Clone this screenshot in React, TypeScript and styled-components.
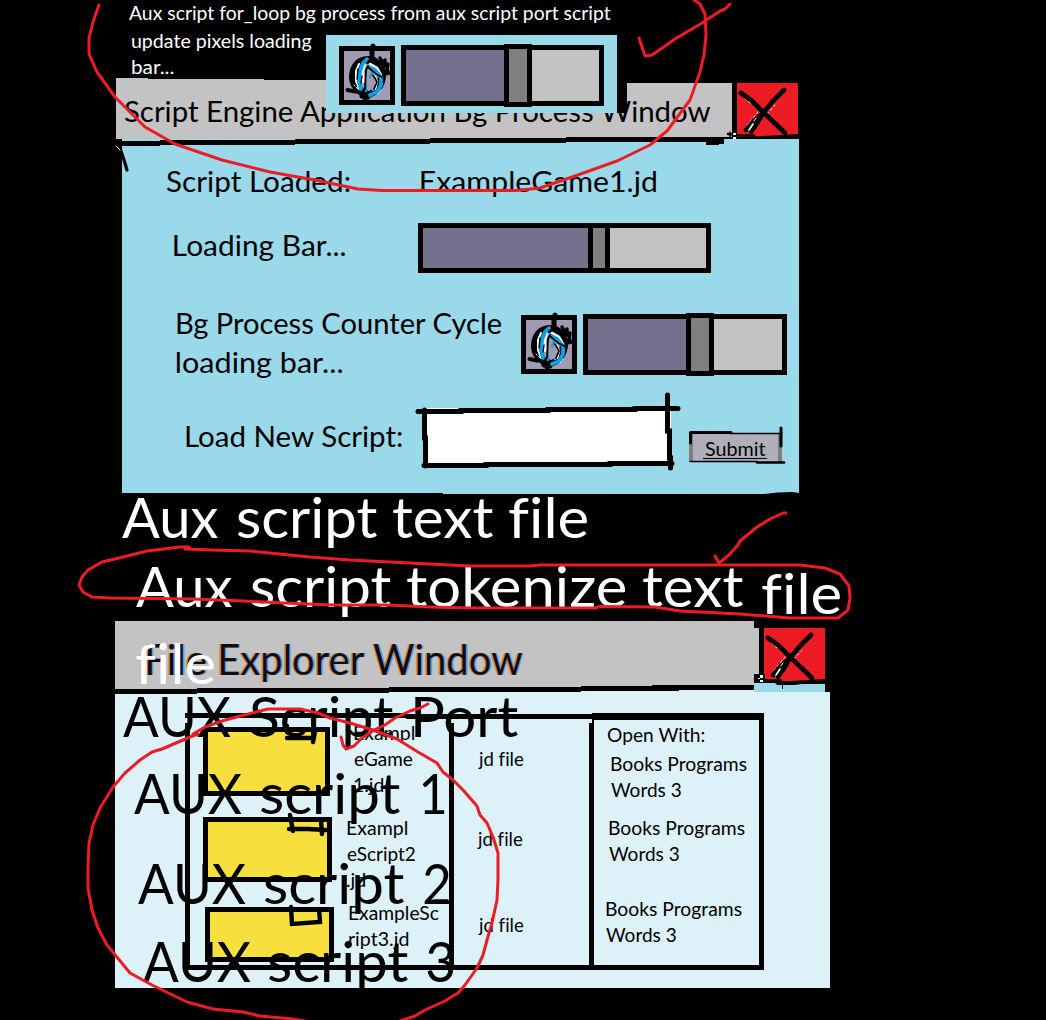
import React, { Fragment } from "react";
import styled, { createGlobalStyle } from "styled-components";

const ink = "#000";
const marker = "#ed1c24";
const cyan = "#99d9ea";
const silver = "#c3c3c3";
const pale = "#dcf1f8";

const GlobalStyle = createGlobalStyle`
  body { margin: 0; background: #000; }
`;

const Desktop = styled.main`
  position: relative;
  width: 1046px;
  height: 1020px;
  overflow: hidden;
  background: #000;
  font-family: Lato, "Open Sans", sans-serif;
`;

/* ---------- text that is condensed to a given ink width ---------- */

const Line = styled.span<{ $size: number; $line: number; $color: string }>`
  display: block;
  flex: none;
  font-size: ${(p) => p.$size}px;
  line-height: ${(p) => p.$line}px;
  height: ${(p) => p.$line}px;
  color: ${(p) => p.$color};
  white-space: nowrap;
  letter-spacing: 0.01px;
  font-variant-ligatures: none;
`;

const Glyphs = styled.span`
  display: inline-block;
  transform-origin: 0 50%;
`;

const pen = document.createElement("canvas").getContext("2d")!;

type TypeProps = {
  children: string;
  w: number;
  size?: number;
  line?: number;
  color?: string;
  className?: string;
};

function Type({ children, w, size = 18.5, line = 26, color = ink, className }: TypeProps) {
  pen.font = `${size}px Lato, "Open Sans", sans-serif`;
  pen.letterSpacing = "0.01px";
  const m = pen.measureText(children);
  const scale = w / (m.actualBoundingBoxLeft + m.actualBoundingBoxRight);
  const shift = m.actualBoundingBoxLeft * scale;
  return (
    <Line className={className} $size={size} $line={line} $color={color} style={{ width: w }}>
      <Glyphs style={{ transform: `translateX(${shift}px) scaleX(${scale})` }}>{children}</Glyphs>
    </Line>
  );
}

const Heading = (p: TypeProps) => <Type size={28} line={39} {...p} />;

const Words = styled.div`
  display: flex;
`;

/* Each word carries its own width and the gap that follows it. */
const Banner = ({ words, color }: { words: [string, number, number?][]; color?: string }) => (
  <Words>
    {words.map(([text, w, gap]) => (
      <Fragment key={text}>
        <Type size={57} line={77} w={w} color={color}>{text}</Type>
        {gap ? <Gap $w={gap}> </Gap> : null}
      </Fragment>
    ))}
  </Words>
);

const Gap = styled.span<{ $w: number }>`
  flex: none;
  width: ${(p) => p.$w}px;
`;

const Note = styled.div<{ $x: number; $y: number }>`
  position: absolute;
  left: ${(p) => p.$x}px;
  top: ${(p) => p.$y}px;
`;

/* ---------- shared layout ---------- */

const Window = styled.section<{ $x: number; $y: number; $w: number }>`
  position: absolute;
  left: ${(p) => p.$x}px;
  top: ${(p) => p.$y}px;
  width: ${(p) => p.$w}px;
`;

const TitleBar = styled.header<{ $h: number }>`
  display: flex;
  height: ${(p) => p.$h}px;
`;

const TitleFill = styled.div<{ $w: number; $top: number; $left: number }>`
  box-sizing: border-box;
  width: ${(p) => p.$w}px;
  padding: ${(p) => p.$top}px 0 0 ${(p) => p.$left}px;
  background: ${silver};
`;

const Row = styled.div<{ $top?: number; $left?: number; $h?: number }>`
  display: flex;
  align-items: flex-start;
  margin-top: ${(p) => p.$top ?? 0}px;
  margin-left: ${(p) => p.$left ?? 0}px;
  height: ${(p) => (p.$h ? p.$h + "px" : "auto")};
`;

const Slot = styled.div<{ $top?: number; $left?: number }>`
  flex: none;
  margin: ${(p) => p.$top ?? 0}px 0 0 ${(p) => p.$left ?? 0}px;
`;

const Drawing = styled.svg`
  position: absolute;
  left: 0;
  top: 0;
  overflow: visible;
  pointer-events: none;
`;

/* ---------- close button ---------- */

const CloseBox = styled.button<{ $top: number; $left: number; $h: number }>`
  flex: none;
  width: 61px;
  height: ${(p) => p.$h}px;
  margin: ${(p) => p.$top}px 0 0 ${(p) => p.$left}px;
  padding: 0;
  border: 0;
  background: ${marker};
  svg { display: block; overflow: visible; }
`;

function Close(p: { top: number; left: number; h: number }) {
  return (
    <CloseBox $top={p.top} $left={p.left} $h={p.h} aria-label="Close">
      <svg width="61" height="54" fill="none" strokeLinecap="round" strokeLinejoin="round">
        <path d="M4 12L13 20M38 22L30 31M24 25L17 34L8 45" stroke="#fff" strokeWidth="1" strokeDasharray="2 3" />
        <path d="M4 10L14 17L25 28L48 50" stroke={ink} strokeWidth="4.8" />
        <path d="M47 7L36 18L26 30L17 38L9 47" stroke={ink} strokeWidth="4.8" />
        <path d="M25 32L19 42L14 49" stroke={ink} strokeWidth="4.4" />
        <path d="M16 41L12 47" stroke="#fff" strokeWidth="1.6" />
        <path d="M19 35L17 38" stroke="#fff" strokeWidth="1" />
        <path d="M-9 51L4 52.5L17 52.5" stroke={ink} strokeWidth="2.6" />
        <path d="M17 55L36 54L60 52.5" stroke={ink} strokeWidth="3" />
        <path d="M-7 49v8M-1 48v4M18.500 54v7" stroke={ink} strokeWidth="1.4" />
        <path d="M-4 50h3v2h-3zM-4 54h3v2h-3z" fill="#fff" />
        <path d="M0 -1H14M16 -1H46" stroke={ink} strokeWidth="1.4" />
      </svg>
    </CloseBox>
  );
}

/* ---------- progress bar ---------- */

const Track = styled.div<{ $w: number; $h: number }>`
  box-sizing: border-box;
  display: flex;
  width: ${(p) => p.$w}px;
  height: ${(p) => p.$h}px;
  border: 5px solid ${ink};
  background: ${silver};
`;
const Done = styled.div<{ $w: number }>`
  width: ${(p) => p.$w}px;
  background: #756f8d;
`;
const Thumb = styled.div<{ $w: number; $bleed: number }>`
  box-sizing: border-box;
  width: ${(p) => p.$w}px;
  margin: ${(p) => -5 - p.$bleed}px 0;
  border: 5px solid ${ink};
  background: #7f7f7f;
`;

const CycleBar = () => (
  <Track $w={204} $h={61}>
    <Done $w={98} />
    <Thumb $w={28} $bleed={1} />
  </Track>
);

/* ---------- counter icon ---------- */

const IconFrame = styled.div`
  box-sizing: border-box;
  width: 56px;
  height: 59px;
  border: 5px solid ${ink};
  background: #9f9bb2;
  svg { display: block; margin: -5px; overflow: visible; }
`;

const CounterIcon = () => (
  <IconFrame>
    <svg width="56" height="59" fill="none" strokeLinecap="round" strokeLinejoin="round">
      <path d="M34 0L33 3L33 13" stroke={ink} strokeWidth="5" />
      <path d="M29 14C19 14 14 22 14 31C14 39 19 44 26 48C37 48 43 38 43 29C42 20 37 14 29 14Z" stroke={ink} strokeWidth="8" />
      <path d="M41 12L44 17L46 14L46 20L49 18L48 24L50 27L46 28L43 20" stroke={ink} strokeWidth="3.400" />
      <path d="M8.500 44L16 45.500L24 45" stroke={ink} strokeWidth="4" />
      <path d="M23 50L29 51M26 48L26 52" stroke={ink} strokeWidth="5" />
      <path d="M20 18L17 25L17 35L20 43" stroke="#fff" strokeWidth="2" />
      <path d="M25 18L23 26L24 35" stroke="#fff" strokeWidth="3.800" />
      <path d="M31 18L38 22L42 29M34 27L38 36L36 43" stroke="#fff" strokeWidth="2.600" />
      <path d="M28 13L24 17L21 25L20 35L22 43" stroke="#00a2e8" strokeWidth="3.800" />
      <path d="M30 21L36 24L42 31L42 39L38 46L31 49" stroke="#00a2e8" strokeWidth="3.800" />
      <path d="M27 39L27 45M33 27L31 31" stroke="#00a2e8" strokeWidth="2.400" />
      <path d="M31 34L30 43M33 37L34 43" stroke="#9f9bb2" strokeWidth="4" />
      <path d="M29 20L27 24L26 43M30 22L37 28L43 31M34 29L38 36L35 43" stroke={ink} strokeWidth="1.800" />
      <path d="M19 23L18 33M23 30L22 37" stroke={ink} strokeWidth="1.400" />
      <path d="M15 39L19 43M39 48L43 43" stroke="#fff" strokeWidth="1" strokeDasharray="1.500 2" />
    </svg>
  </IconFrame>
);

/* ---------- script engine window ---------- */

const EngineBody = styled.div`
  position: relative;
  box-sizing: border-box;
  width: 677px;
  height: 355px;
  margin-left: 7px;
  padding-top: 23px;
  background: ${cyan};
`;

const Field = styled.input`
  position: relative;
  box-sizing: border-box;
  display: block;
  width: 246px;
  height: 57px;
  padding: 0 8px;
  border: 0;
  outline: 0;
  background: #fff;
`;

const SubmitButton = styled.button`
  box-sizing: border-box;
  display: flex;
  align-items: flex-start;
  width: 93px;
  height: 29px;
  padding: 3px 0 0 10px;
  border: solid #7f7f7f;
  border-width: 0 4px;
  background: #b0aebb;
  font-family: inherit;
`;

const Underlined = styled.div`
  width: 64px;
  height: 22px;
  border-bottom: 1px solid ${ink};
`;

const EngineWindow = () => (
  <Window $x={115} $y={78} $w={684}>
    <TitleBar $h={61}>
      <TitleFill $w={617} $top={14} $left={9}>
        <Heading w={588}>Script Engine Application Bg Process Window</Heading>
      </TitleFill>
      <Close top={5} left={5} h={54} />
    </TitleBar>
    <EngineBody>
      <Row $left={44} $h={39}>
        <Heading w={184}>Script Loaded:</Heading>
        <Slot $left={71}><Heading w={235}>ExampleGame1.jd</Heading></Slot>
      </Row>
      <Row $top={22} $left={52} $h={50}>
        <Slot $top={3}><Heading w={172}>Loading Bar...</Heading></Slot>
        <Slot $left={72}>
          <Track $w={293} $h={50}>
            <Done $w={165} />
            <Thumb $w={22} $bleed={0} />
          </Track>
        </Slot>
      </Row>
      <Row $top={31} $left={55} $h={78}>
        <div>
          <Heading w={325}>Bg Process Counter Cycle</Heading>
          <Heading w={166}>loading bar...</Heading>
        </div>
        <Slot $top={11} $left={19}><CounterIcon /></Slot>
        <Slot $top={10} $left={6}><CycleBar /></Slot>
      </Row>
      <Row $top={26} $left={64}>
        <Slot $top={9}><Heading w={217}>Load New Script:</Heading></Slot>
        <Slot $left={22}><Field aria-label="Load New Script" /></Slot>
        <Slot $top={25} $left={18}>
          <SubmitButton>
            <Underlined><Type w={61}>Submit</Type></Underlined>
          </SubmitButton>
        </Slot>
      </Row>
    </EngineBody>
    <Drawing width="684" height="416" viewBox="115 78 684 416" fill={ink}>
      <path d="M115 78h1v62h-1zM148 78H264V79H148zM264 78H627V80H264zM627 78H733V83H627z" />
      <path d="M617 78h10v35h-10z" />
      <path d="M115 141H160V140H295V139H430V138H566V137H733V139H724V144H719V145H706V142H700V142H566V143H430V144H295V145H160V146H115z" />
      <path d="M122 494V493H443V494z" />
      <g fill="none" stroke={ink} strokeLinecap="round" strokeLinejoin="round">
        <path d="M116 146L121 151L124 160L127 170" strokeWidth="3.200" />
        <path d="M116 146L120 150" stroke="#fff" strokeWidth="1" />
        <g strokeWidth="5" strokeLinejoin="miter">
          <path d="M418 411.500H461V410.500H548V409.500H635V408.500H678" />
          <path d="M424.500 410V438H425.500V466" />
          <path d="M667.500 395V431H669.500V458H670.500V468" />
          <path d="M424 465.500H486V464.500H610V463.500H672" />
        </g>
        <path d="M690.500 443V432.500H731M781 428V446" strokeWidth="3" />
        <path d="M730 433.500H782M690 461.500H757" strokeWidth="1.400" />
        <path d="M757 462.500H784" strokeWidth="2.600" />
        <path d="M758 496L764 495L778 493.500L792 493L799 494" strokeWidth="2" />
      </g>
    </Drawing>
  </Window>
);

/* ---------- floating progress popup ---------- */

const Popup = styled.aside`
  position: absolute;
  left: 326px;
  top: 35px;
  box-sizing: border-box;
  display: flex;
  align-items: flex-start;
  gap: 6px;
  width: 291px;
  height: 78px;
  padding: 10px 13px;
  background: ${cyan};
`;

/* ---------- file explorer window ---------- */

const ExplorerTitle = styled(Type)`
  text-shadow: -1.500px 0 rgba(216, 120, 20, 0.700), 1.500px 0 rgba(60, 150, 235, 0.750);
`;

const ExplorerBody = styled.div`
  box-sizing: border-box;
  width: 715px;
  height: 298px;
  padding: 23px 0 0 70px;
  background: ${pale};
`;

const FileTable = styled.div`
  box-sizing: border-box;
  display: grid;
  grid-template-columns: 259px 140px 170px;
  width: 579px;
  height: 257px;
  border: 5px solid ${ink};
`;

const Column = styled.div<{ $ruled?: boolean }>`
  border-left: ${(p) => (p.$ruled ? `5px solid ${ink}` : "0")};
`;

const Folder = styled.div<{ $w: number; $h: number }>`
  position: relative;
  box-sizing: border-box;
  width: ${(p) => p.$w}px;
  height: ${(p) => p.$h}px;
  border: 5px solid ${ink};
  background: #f7df3d;
`;

const Tab = styled.svg`
  position: absolute;
  left: -5px;
  top: -5px;
  overflow: visible;
  fill: none;
  stroke: ${ink};
  stroke-width: 4.400;
  stroke-linecap: round;
`;

type FileProps = { top: number; h: number; left: number; folder: [number, number, number]; tab: string; gap: number; parts: [string, number][] };

const FileEntry = (p: FileProps) => (
  <Row $top={p.top} $left={p.left} $h={p.h}>
    <Slot $top={p.folder[0]}>
      <Folder $w={p.folder[1]} $h={p.folder[2]}>
        <Tab width="10" height="10"><path d={p.tab} /></Tab>
      </Folder>
    </Slot>
    <Slot $left={p.gap}>
      {p.parts.map(([text, w]) => <Type key={text} w={w}>{text}</Type>)}
    </Slot>
  </Row>
);

const Program = ({ top, left }: { top: number; left: number }) => (
  <Row $top={top} $left={left}>
    <div>
      <Type w={136}>Books Programs</Type>
      <Type w={70}>Words 3</Type>
    </div>
  </Row>
);

const ExplorerWindow = () => (
  <Window $x={115} $y={621} $w={715}>
    <TitleBar $h={69}>
      <TitleFill $w={639} $top={10} $left={32}>
        <ExplorerTitle w={377} size={42} line={56} color="#160c10">File Explorer Window</ExplorerTitle>
      </TitleFill>
      <Close top={7} left={10} h={53} />
    </TitleBar>
    <ExplorerBody>
      <FileTable>
        <Column>
          <FileEntry top={2} h={78} left={13} folder={[7, 127, 69]} tab="M84 -1V5M84 11H111M112 4L110 15" gap={24} parts={[["Exampl", 60], ["eGame", 59], ["1.jd", 30]]} />
          <FileEntry top={17} h={78} left={13} folder={[2, 129, 65]} tab="M87 -2L90 14M86 12H105L123 13M118 4L119 17" gap={15} parts={[["Exampl", 60], ["eScript2", 68], [".jd", 19]]} />
          <FileEntry top={7} h={62} left={15} folder={[7, 129, 55]} tab="M86 0L87 17L115 15L114 2" gap={15} parts={[["ExampleSc", 90], ["ript3.jd", 60]]} />
        </Column>
        <Column $ruled>
          <Row $top={28} $left={24}><Type w={46}>jd file</Type></Row>
          <Row $top={54} $left={23}><Type w={46}>jd file</Type></Row>
          <Row $top={60} $left={24}><Type w={46}>jd file</Type></Row>
        </Column>
        <Column $ruled>
          <Row $top={4} $left={13}><Type w={98}>Open With:</Type></Row>
          <Program top={3} left={17} />
          <Program top={12} left={15} />
          <Program top={29} left={12} />
        </Column>
      </FileTable>
    </ExplorerBody>
    <Drawing width="715" height="367" viewBox="115 621 715 367">
      <path fill={silver} d="M754 628h5v49h-5z" />
      <path fill={ink} d="M115 689H197V688H389V687H581V686H652V685H754V690H679V691H581V692H389V693H197V694H115z" />
      <path fill={ink} d="M754 690H830V692H754z" />
      <path fill={cyan} d="M754 683H775L777 685H795L802 684H825V692H754z" />
      <path fill={ink} d="M782 682h1v7h-1zM754 674h11v9h-11z" />
      <path fill="#fff" d="M760 675h3v3h-3zM760 680h3v2h-3zM758 678h2v1h-2z" />
      <path fill={pale} d="M185 718h5v5h-5zM449 719h5v4h-5zM589 719h3v4h-3zM406 713h186v1H406z" />
      <path fill={ink} d="M406 718h186v1H406zM592 713h172v7H592z" />
    </Drawing>
  </Window>
);

/* ---------- marker strokes ---------- */

const Markup = styled(Drawing)`
  fill: none;
  stroke: ${marker};
  stroke-width: 3;
  stroke-linecap: round;
  stroke-linejoin: round;
`;

const strokes = [
  "99,5 93,22 89,38 89,54 97,72 115,97 145,127 175,144 222,160 270,172 315,180 358,189 382,190.5 516,190.5 540,188 575,176 617,161 650,145 667,131 690,100 700,72 704,55 706,35 705,14 700,4 694,0",
  "639,38 641,44 645,56 652,55 675,39 702,23 720,11 725,9 730,4",
  "185,549 189,547 180,547 147,551 123,557 102,562 88,570 82,577 79,585 83,592 92,597 110,598 193,599 243,601 283,603 333,605 387,605 430,607 470,608 595,608 600,606.5 655,607 680,611 740,614 790,618 838,618 848,610 850,598 849,586 840,574 825,568 800,565 540,565 530,566 470,566 430,564 350,560 310,557 250,551 211,550 185,549",
  "715,556 719,563 729,555 738,545 740,541 757,527 770,519 783,513 786,513",
  "198,734 190,737 162,749 152,752 140,760 125,773 113,787 100,808 93,825 89,843 88,867 88,888 92,910 98,928 107,945 130,973 152,985 187,1002 213,1009 243,1012 260,1016 293,1019 310,1022",
  "400,1021 415,1016 425,1010 445,1001 458,993 465,985 477,968 483,955 487,940 492,923 497,900 498,880 498,853 493,837 487,823 480,815 477,806 463,790 453,780 443,772 437,763 418,752 397,739 373,730 350,723 330,718 318,713 300,709 268,709 240,716 222,721 205,727 193,734",
  "341,737 343,745 346,749 354,746 362,738 374,730 385,725 395,718 410,711 420,708 428,704",
];

export default function App() {
  return (
    <Desktop>
      <GlobalStyle />
      <EngineWindow />
      <Popup>
        <Slot $top={1}><CounterIcon /></Slot>
        <CycleBar />
      </Popup>
      <Note $x={129} $y={0}><Type w={482} color="#fff">Aux script for_loop bg process from aux script port script</Type></Note>
      <Note $x={132} $y={28}>
        <Type w={180} color="#fff">update pixels loading</Type>
        <Type w={42} color="#fff">bar...</Type>
      </Note>
      <ExplorerWindow />
      <Note $x={122} $y={478}>
        <Banner color="#fff" words={[["Aux", 96, 19], ["script", 140, 16], ["text", 100, 16], ["file", 78]]} />
      </Note>
      <Note $x={136} $y={547}>
        <Banner color="#fff" words={[["Aux", 96, 19], ["script", 140, 16], ["tokenize", 218, 18], ["text", 100]]} />
      </Note>
      <Note $x={762} $y={554}><Banner color="#fff" words={[["file", 78]]} /></Note>
      <Note $x={136} $y={624}><Banner color="#fff" words={[["file", 78]]} /></Note>
      <Note $x={123} $y={677}><Banner words={[["AUX", 108, 19], ["Script", 143, 22], ["Port", 103]]} /></Note>
      <Note $x={134} $y={754}><Banner words={[["AUX", 108, 18], ["script", 140, 22], ["1", 23]]} /></Note>
      <Note $x={138} $y={844}><Banner words={[["AUX", 108, 18], ["script", 140, 20], ["2", 25]]} /></Note>
      <Note $x={143} $y={922}><Banner words={[["AUX", 108, 17], ["script", 140, 19], ["3", 26]]} /></Note>
      <Markup width="1046" height="1020">
        {strokes.map((points) => <polyline key={points} points={points} />)}
      </Markup>
    </Desktop>
  );
}
